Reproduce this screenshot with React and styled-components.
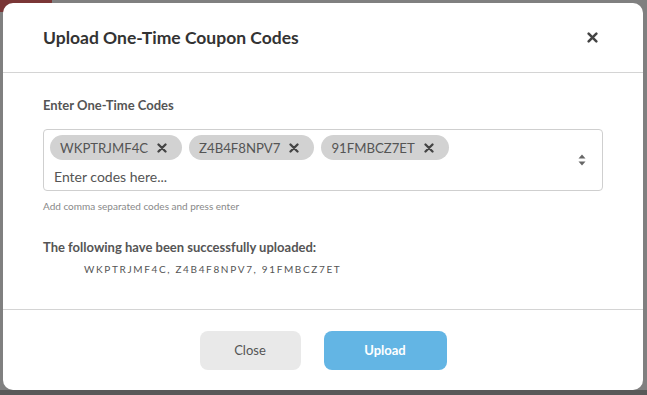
import React, { useState } from "react";
import styled, { createGlobalStyle } from "styled-components";

const GlobalStyle = createGlobalStyle`
  html, body {
    margin: 0;
    padding: 0;
    height: 100%;
    font-family: Lato, "Open Sans", Arial, sans-serif;
  }
  #root {
    height: 100%;
  }
`;

const Page = styled.div`
  position: relative;
  height: 100vh;
  background: #808080;
  overflow: hidden;
`;

const BrandTab = styled.div`
  width: 52px;
  height: 12px;
  background: #7a3636;
  border-bottom-right-radius: 10px;
`;

const FooterStrip = styled.div`
  position: absolute;
  left: 0;
  right: 0;
  bottom: 0;
  height: 5px;
  background: #595959;
`;

const Overlay = styled.div`
  position: absolute;
  inset: 0;
  display: flex;
  padding: 3px 0 0 3px;
`;

const Modal = styled.div`
  width: 640px;
  height: 387px;
  background: #fff;
  border-radius: 10px;
  display: flex;
  flex-direction: column;
  color: #555;
`;

const Header = styled.div`
  height: 70px;
  box-sizing: border-box;
  display: flex;
  align-items: center;
  justify-content: space-between;
  padding: 0 44px 0 40px;
  border-bottom: 1px solid #d4d4d4;
`;

const Title = styled.h2`
  margin: 0;
  font-size: 17.5px;
  font-weight: 700;
  color: #333;
`;

const CloseIcon = styled.button`
  border: none;
  background: transparent;
  padding: 0;
  width: 14px;
  height: 14px;
  display: flex;
  align-items: center;
  justify-content: center;
  cursor: pointer;
  color: #444;
`;

const Body = styled.div`
  flex: 1;
  padding: 24px 40px 0 40px;
  border-bottom: 1px solid #d4d4d4;
`;

const Label = styled.div`
  font-size: 13px;
  font-weight: 700;
  line-height: 16px;
  color: #555;
  margin-bottom: 16px;
`;

const TagBox = styled.div`
  height: 62px;
  box-sizing: border-box;
  border: 1px solid #cfcfcf;
  border-radius: 4px;
  display: flex;
  align-items: center;
  padding: 0 16px 0 6px;
`;

const TagArea = styled.div`
  flex: 1;
  display: flex;
  flex-direction: column;
  gap: 5px;
  padding-top: 2px;
`;

const ChipRow = styled.div`
  display: flex;
  gap: 7px;
`;

const Chip = styled.span`
  height: 25px;
  display: inline-flex;
  align-items: center;
  gap: 9px;
  padding: 0 15px 0 10px;
  background: #d2d2d2;
  border-radius: 13px;
  font-size: 13.2px;
  color: #555;
`;

const ChipRemove = styled.span`
  display: inline-flex;
  color: #444;
`;

const CodeInput = styled.input`
  border: none;
  outline: none;
  background: transparent;
  font-family: inherit;
  font-size: 14px;
  color: #555;
  height: 22px;
  padding: 0 0 0 4px;
  &::placeholder {
    color: #555;
  }
`;

const Hint = styled.div`
  font-size: 10px;
  color: #888;
  margin-top: 9px;
`;

const SuccessTitle = styled.div`
  font-size: 13px;
  font-weight: 700;
  color: #555;
  margin-top: 27px;
`;

const CodeList = styled.div`
  font-size: 10px;
  letter-spacing: 1.65px;
  color: #555;
  padding-left: 41px;
  margin-top: 8px;
`;

const Footer = styled.div`
  height: 80px;
  display: flex;
  align-items: center;
  justify-content: center;
  gap: 23px;
`;

const Button = styled.button`
  height: 39px;
  width: ${(p) => p.$width}px;
  border: none;
  border-radius: 8px;
  font-family: inherit;
  font-size: 13px;
  font-weight: ${(p) => (p.$primary ? 700 : 400)};
  background: ${(p) => (p.$primary ? "#63b5e4" : "#e9e9e9")};
  color: ${(p) => (p.$primary ? "#fff" : "#555")};
  cursor: pointer;
`;

const XMark = ({ size = 10 }) => (
  <svg width={size} height={size} viewBox="0 0 10 10">
    <path
      d="M1.5 1.5 L8.5 8.5 M8.5 1.5 L1.5 8.5"
      stroke="currentColor"
      strokeWidth="2.3"
      strokeLinecap="round"
    />
  </svg>
);

const SortIcon = () => (
  <svg width="8" height="12" viewBox="0 0 8 12">
    <path d="M4 0.5 L7.5 4.5 H0.5 Z" fill="#666" />
    <path d="M4 11.5 L7.5 7.5 H0.5 Z" fill="#666" />
  </svg>
);

const App = () => {
  const [codes] = useState(["WKPTRJMF4C", "Z4B4F8NPV7", "91FMBCZ7ET"]);

  return (
    <>
      <GlobalStyle />
      <Page>
        <BrandTab />
        <FooterStrip />
        <Overlay>
          <Modal>
            <Header>
              <Title>Upload One-Time Coupon Codes</Title>
              <CloseIcon aria-label="close">
                <XMark size={11} />
              </CloseIcon>
            </Header>
            <Body>
              <Label>Enter One-Time Codes</Label>
              <TagBox>
                <TagArea>
                  <ChipRow>
                    {codes.map((c) => (
                      <Chip key={c}>
                        {c}
                        <ChipRemove>
                          <XMark />
                        </ChipRemove>
                      </Chip>
                    ))}
                  </ChipRow>
                  <CodeInput placeholder="Enter codes here..." />
                </TagArea>
                <SortIcon />
              </TagBox>
              <Hint>Add comma separated codes and press enter</Hint>
              <SuccessTitle>The following have been successfully uploaded:</SuccessTitle>
              <CodeList>{codes.join(", ")}</CodeList>
            </Body>
            <Footer>
              <Button $width={101}>Close</Button>
              <Button $width={123} $primary>
                Upload
              </Button>
            </Footer>
          </Modal>
        </Overlay>
      </Page>
    </>
  );
};

export default App;
